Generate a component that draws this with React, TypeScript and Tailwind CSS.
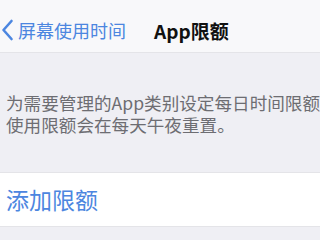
export default function App() {
  const font = { fontFamily: '"Noto Sans CJK SC", "Noto Sans", sans-serif' };
  return (
    <div className="w-[320px] h-[240px] overflow-hidden bg-[#efeff4]" style={font}>
      {/* Nav bar */}
      <div className="h-[53px] bg-[#f8f8fa] border-b border-[#e4e4e8] flex items-center pt-[8px]">
        <div className="flex items-center text-[#4c86e0]">
          <svg width="14" height="22" viewBox="0 0 14 22" className="ml-[1px]">
            <path d="M10.5 2 L2.5 11 L10.5 20" fill="none" stroke="#4c86e0" strokeWidth="2.6" strokeLinecap="round" strokeLinejoin="round" />
          </svg>
          <span className="ml-[3px] text-[18px] leading-none">屏幕使用时间</span>
        </div>
        <span className="ml-[28px] text-[19px] leading-none font-semibold text-[#111]">App限额</span>
      </div>

      {/* Description */}
      <div className="pt-[39px] pl-[6px] text-[17.6px] leading-[22px] text-[#6d6d72] whitespace-nowrap overflow-hidden">
        <div>为需要管理的App类别设定每日时间限额。</div>
        <div>使用限额会在每天午夜重置。</div>
      </div>

      {/* Add limit row */}
      <div className="mt-[36px] h-[55px] bg-white border-y border-[#e4e4e8] flex items-center pl-[6px]">
        <span className="text-[23px] leading-none text-[#4c86e0]">添加限额</span>
      </div>
    </div>
  );
}
